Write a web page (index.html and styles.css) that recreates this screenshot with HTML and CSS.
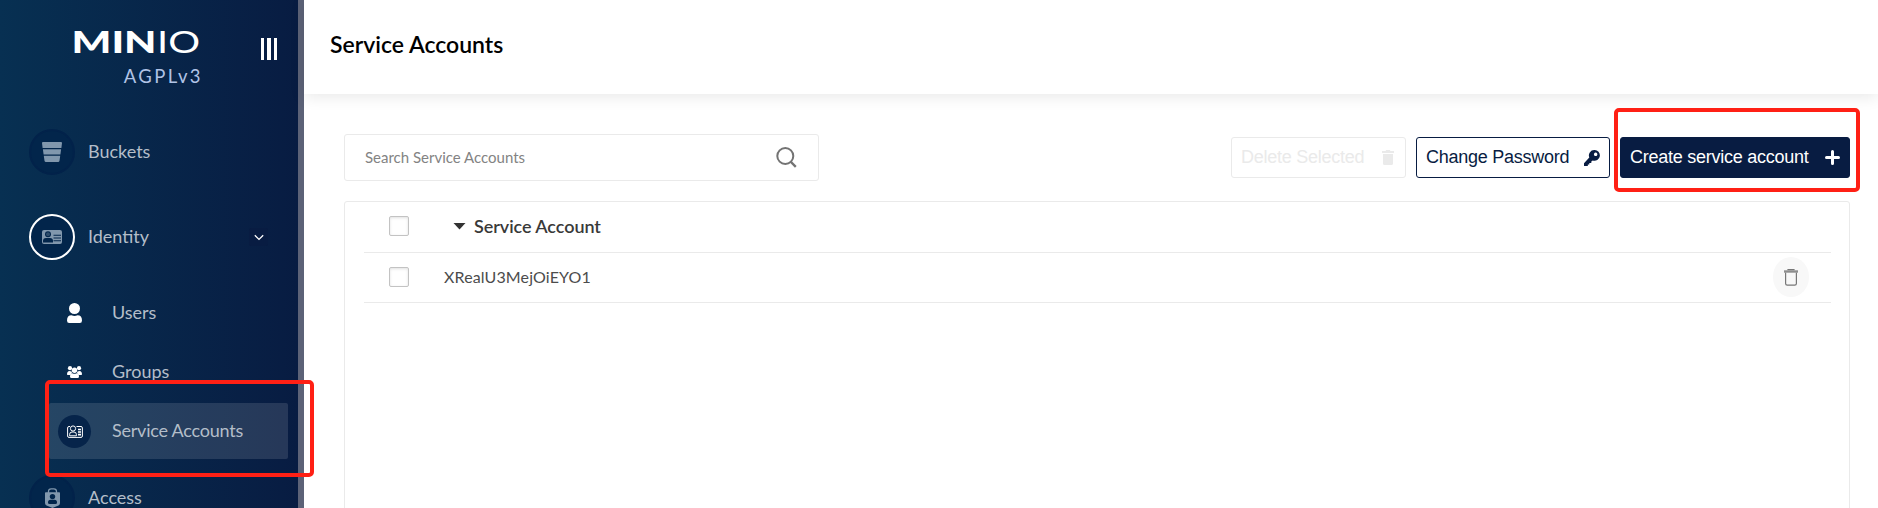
FILE: index.html
```html
<!DOCTYPE html>
<html lang="en">
<head>
<meta charset="utf-8">
<title>Service Accounts</title>
<link rel="stylesheet" href="styles.css">
</head>
<body>
<div class="app">
  <aside class="sidebar">
    <div class="brand">
      <div class="brand-name">
        <svg class="logo" width="128" height="24" viewBox="0 0 128 24">
          <text class="logo-bold" transform="translate(-1.500 22.500)" textLength="85" lengthAdjust="spacingAndGlyphs">MIN</text>
          <text class="logo-thin" transform="translate(84 22.500)" textLength="43" lengthAdjust="spacingAndGlyphs">IO</text>
        </svg>
        <span class="license">AGPLv3</span>
      </div>
      <div class="toggle"><i></i><i></i><i></i></div>
    </div>
    <nav class="nav">
      <a class="item">
        <span class="disc"><svg width="20" height="20" viewBox="0 0 20 20" fill="#8197ad"><path d="M1 0h18q1 0 1 1l-.6 5H.6L0 1q0-1 1-1zM.9 7.2h18.2l-.7 5.4H1.600zM1.800 13.800h16.400L17.500 18.700q-.2 1.300-1.500 1.300H4q-1.300 0-1.500-1.300z"/></svg></span>
        <span class="label">Buckets</span>
      </a>
      <a class="item">
        <span class="disc open"><svg width="20" height="14" viewBox="0 0 20 14"><rect width="20" height="14" rx="2" fill="#8197ad"/><g fill="#02254b"><circle cx="6" cy="4.300" r="3"/><path d="M1 12.500V11q0-3 3-3h4q3 0 3 3v1.500z"/><path d="M11.500 4.800H19v1H11.500zM11.500 7.500H19v1H11.500zM11.500 10.300H19v1H11.500z"/></g><circle cx="6" cy="4.300" r="2" fill="#8197ad" opacity=".35"/></svg></span>
        <span class="label">Identity</span>
        <span class="chevron"><svg width="10" height="7" viewBox="0 0 10 7" fill="none" stroke="#fff" stroke-width="1.300"><path d="M.8 1.200 5 5.400 9.200 1.200"/></svg></span>
      </a>
      <div class="submenu">
        <a class="subitem">
          <span class="subdisc"><svg width="15" height="20" viewBox="0 0 15 20" fill="#fff"><circle cx="7.500" cy="5.500" r="5.500"/><path d="M0 17.500Q0 12.300 4.500 12.300 7.500 13.800 10.500 12.300 15 12.300 15 17.500 15 20 12.800 20H2.200Q0 20 0 17.500z"/></svg></span>
          <span class="label">Users</span>
        </a>
        <a class="subitem">
          <span class="subdisc"><svg width="15" height="12" viewBox="0 0 15 12" fill="#fff"><circle cx="3" cy="2.200" r="2.100"/><circle cx="12" cy="2.200" r="2.100"/><path d="M0 8.500Q0 5 2.500 4.900L4.600 5.500 5 7 3.500 9H.6zM15 8.500Q15 5 12.500 4.900L10.400 5.500 10 7 11.500 9h2.900z"/><circle cx="7.500" cy="4.300" r="2.700"/><path d="M3 10.500Q3 7.500 5.500 7.300 7.500 8.400 9.500 7.300 12 7.500 12 10.500 12 12 10.500 12h-6Q3 12 3 10.500z"/></svg></span>
          <span class="label">Groups</span>
        </a>
        <a class="subitem selected">
          <span class="subdisc filled"><svg width="16" height="13" viewBox="0 0 16 13" fill="none" stroke="#fff"><path d="M3 1.500H2Q.6 1.500.6 3v8q0 1.400 1.400 1.400h12q1.400 0 1.400-1.400V3q0-1.500-1.400-1.500H9.500"/><circle cx="6" cy="3.500" r="2.600"/><path d="M2.600 10.800V9.500Q2.600 7 5 7h2q2.400 0 2.400 2.500v1.300z"/><path d="M11 4.500h3M11 7h3M11 9.600h3" stroke-width="1.600"/></svg></span>
          <span class="label">Service Accounts</span>
        </a>
      </div>
      <a class="item">
        <span class="disc"><svg width="15" height="20" viewBox="0 0 15 20"><path d="M3.500 5V3.500Q3.500.8 6.200.8h2.600q2.700 0 2.700 2.700V5" fill="none" stroke="#8197ad" stroke-width="1.300"/><path d="M.8 4.200h13.400q.8 0 .8.800v10q0 1.800-1.500 2.500L7.500 20 1.500 17.500Q0 16.800 0 15V5q0-.8.8-.8z" fill="#8197ad"/><circle cx="7.500" cy="8.600" r="2.700" fill="#02254b"/><path d="M3 14.500q0-2.700 2.500-2.700h4q2.500 0 2.500 2.700 0 1.500-1.500 1.500h-6Q3 16 3 14.500z" fill="#02254b"/></svg></span>
        <span class="label">Access</span>
      </a>
    </nav>
  </aside>
  <div class="scrollbar"></div>
  <main class="main">
    <header class="page-header"><h1>Service Accounts</h1></header>
    <section class="content">
      <div class="toolbar">
        <div class="search">
          <span class="placeholder">Search Service Accounts</span>
          <svg width="21" height="21" viewBox="0 0 21 21" fill="none" stroke="#737373" stroke-width="2"><circle cx="9.300" cy="9" r="8"/><path d="m14.500 14.500 5.300 5.300" stroke-width="2.400"/></svg>
        </div>
        <div class="actions">
          <button class="btn disabled"><span>Delete Selected</span><svg width="12" height="15" viewBox="0 0 12 15" fill="#eaeaea"><path d="M0 1h3.500L4.200 0h3.600l.7 1H12v2H0zM1 4h10v9.500q0 1.500-1.500 1.500h-7Q1 15 1 13.500z"/></svg></button>
          <button class="btn"><span>Change Password</span><svg width="16" height="16" viewBox="0 0 16 16"><path d="M10.300 0A5.400 5.400 0 1 1 8.700 10.500L7.300 11.500V13H5.300v1.500H3.800V16H0V13.200L5.300 7.500A5.400 5.400 0 0 1 10.300 0zM11.600 2.600a1.700 1.700 0 1 0 .1 0z" fill="#081c42" fill-rule="evenodd"/></svg></button>
          <button class="btn primary"><span>Create service account</span><svg width="15" height="15" viewBox="0 0 15 15" stroke="#fff" stroke-width="3" stroke-linecap="round"><path d="M7.500 1.500v12M1.500 7.500h12"/></svg></button>
        </div>
      </div>
      <div class="table">
        <div class="row head">
          <span class="check"></span>
          <svg class="caret" width="13" height="7" viewBox="0 0 12 7" fill="#333"><path d="M0 0h12L6 6.500z"/></svg>
          <span class="column">Service Account</span>
        </div>
        <div class="row">
          <span class="check"></span>
          <span class="key">XRealU3MejOiEYO1</span>
          <span class="delete"><svg width="14" height="17" viewBox="0 0 14 17" fill="none" stroke="#777" stroke-width="1.200"><path d="M1.600 3.500V14.500q0 1.700 1.700 1.700h7.400q1.700 0 1.700-1.700V3.500"/><path d="M0 2.500h14" stroke="#8e8e8e" stroke-width="2.400"/><path d="M4 1.200V.7h6v.5"/></svg></span>
        </div>
      </div>
    </section>
  </main>
  <div class="mark mark-nav"></div>
  <div class="mark mark-create"></div>
</div>
</body>
</html>
```
FILE: styles.css
```css
* { box-sizing: border-box; }
body { margin: 0; font-family: Lato, sans-serif; background: #fff; }
.app { position: relative; display: flex; width: 1878px; height: 508px; overflow: hidden; }

.sidebar { width: 298px; flex: none; background: linear-gradient(90deg, #073052 0%, #081c42 100%); overflow: hidden; }
.brand { display: flex; height: 129px; padding: 30px 21px 0 73px; justify-content: space-between; }
.brand-name { display: flex; flex-direction: column; align-items: flex-end; width: 128px; }
.logo { flex: none; overflow: visible; fill: #fff; }
.logo-bold { font: 900 30px Lato, sans-serif; }
.logo-thin { font: 400 30px Lato, sans-serif; }
.license { margin: 11px -2px 0 0; font-size: 18.500px; line-height: 22px; letter-spacing: 2.400px; color: #b0c3e6; }
.toggle { display: flex; gap: 3px; margin-top: 8px; height: 22px; }
.toggle i { width: 3.400px; background: #fff; }

.item { display: flex; align-items: center; height: 46px; padding: 0 30px 0 29px; }
.item + .item { margin-top: 39px; }
.disc { display: flex; align-items: center; justify-content: center; width: 46px; height: 46px; border: 2px solid #02224a; border-radius: 50%; background: #02254b; }
.disc.open { border-color: #fff; }
.label { padding-bottom: 2px; font-size: 18px; line-height: 24px; color: #b4bec9; }
.item .label { margin-left: 13px; }
.chevron { display: flex; align-items: center; justify-content: center; width: 19px; height: 18px; margin-left: auto; border-radius: 2px; background: #081c42; }
.submenu { display: flex; flex-direction: column; gap: 3px; padding: 25px 10px 16px 49px; }
.subitem { display: flex; align-items: center; height: 56px; padding-left: 9px; border-radius: 2px; }
.subitem.selected { background: rgba(255, 255, 255, .12); }
.subitem.selected .label { letter-spacing: -.22px; }
.subdisc { display: flex; align-items: center; justify-content: center; width: 33px; height: 33px; border-radius: 50%; }
.subdisc.filled { background: #06244a; }
.subitem .label { margin-left: 21px; }
.scrollbar { width: 6px; flex: none; background: #5c6277; }

.main { display: flex; flex-direction: column; flex: 1; }
.page-header { display: flex; flex: none; align-items: center; height: 94px; padding: 0 0 6px 26px; box-shadow: 0 3px 15px rgba(0, 0, 0, .09); }
h1 { margin: 0; font-size: 23px; line-height: 28px; font-weight: 600; color: #000; }
.content { display: flex; flex-direction: column; flex: 1; gap: 20px; padding: 40px 28px 0 40px; }
.toolbar { display: flex; flex: none; align-items: center; justify-content: space-between; height: 47px; }
.search { display: flex; align-items: center; justify-content: space-between; width: 475px; height: 47px; padding: 0 21px 0 20px; border: 1px solid #eaeaea; border-radius: 3px; font-size: 15px; color: #838383; }
.placeholder { padding-bottom: 2px; }
.actions { display: flex; gap: 10px; }
.btn { display: flex; align-items: center; justify-content: space-between; width: 194px; height: 41px; padding: 0 9px; border: 1px solid #081c42; border-radius: 3px; background: #fff; color: #081c42; font: 18px "Liberation Sans", Arial, sans-serif; letter-spacing: -.25px; white-space: nowrap; }
.btn.disabled { width: 175px; border-color: #eaeaea; color: #eaeaea; padding-right: 11px; }
.btn.primary { width: 230px; background: #081c42; color: #fff; }
.table { flex: none; height: 320px; padding: 0 18px 0 19px; border: 1px solid #eaeaea; border-radius: 3px; }
.row { display: flex; align-items: center; height: 50px; padding: 0 22px 1px 25px; border-bottom: 1px solid #eaeaea; }
.row.head { height: 51px; padding-bottom: 2px; }
.check { width: 20px; height: 20px; border: 1px solid #c3c3c3; border-radius: 2px; box-shadow: inset 0 1px 3px rgba(0, 0, 0, .12); }
.caret { margin-left: 44px; }
.column { margin-left: 8px; font-size: 18px; letter-spacing: -.06px; font-weight: 600; color: #393939; }
.key { margin-left: 35px; padding-bottom: 1px; font-size: 16px; letter-spacing: .13px; color: #4c4c4c; }
.delete { display: flex; align-items: center; justify-content: center; width: 36px; height: 40px; margin-left: auto; border-radius: 50%; background: #f8f8f8; }

.mark { position: absolute; border: 4px solid #ff2015; border-radius: 5px; }
.mark-nav { left: 45px; top: 380px; width: 269px; height: 97px; }
.mark-create { left: 1614px; top: 108px; width: 246px; height: 84px; }
```
